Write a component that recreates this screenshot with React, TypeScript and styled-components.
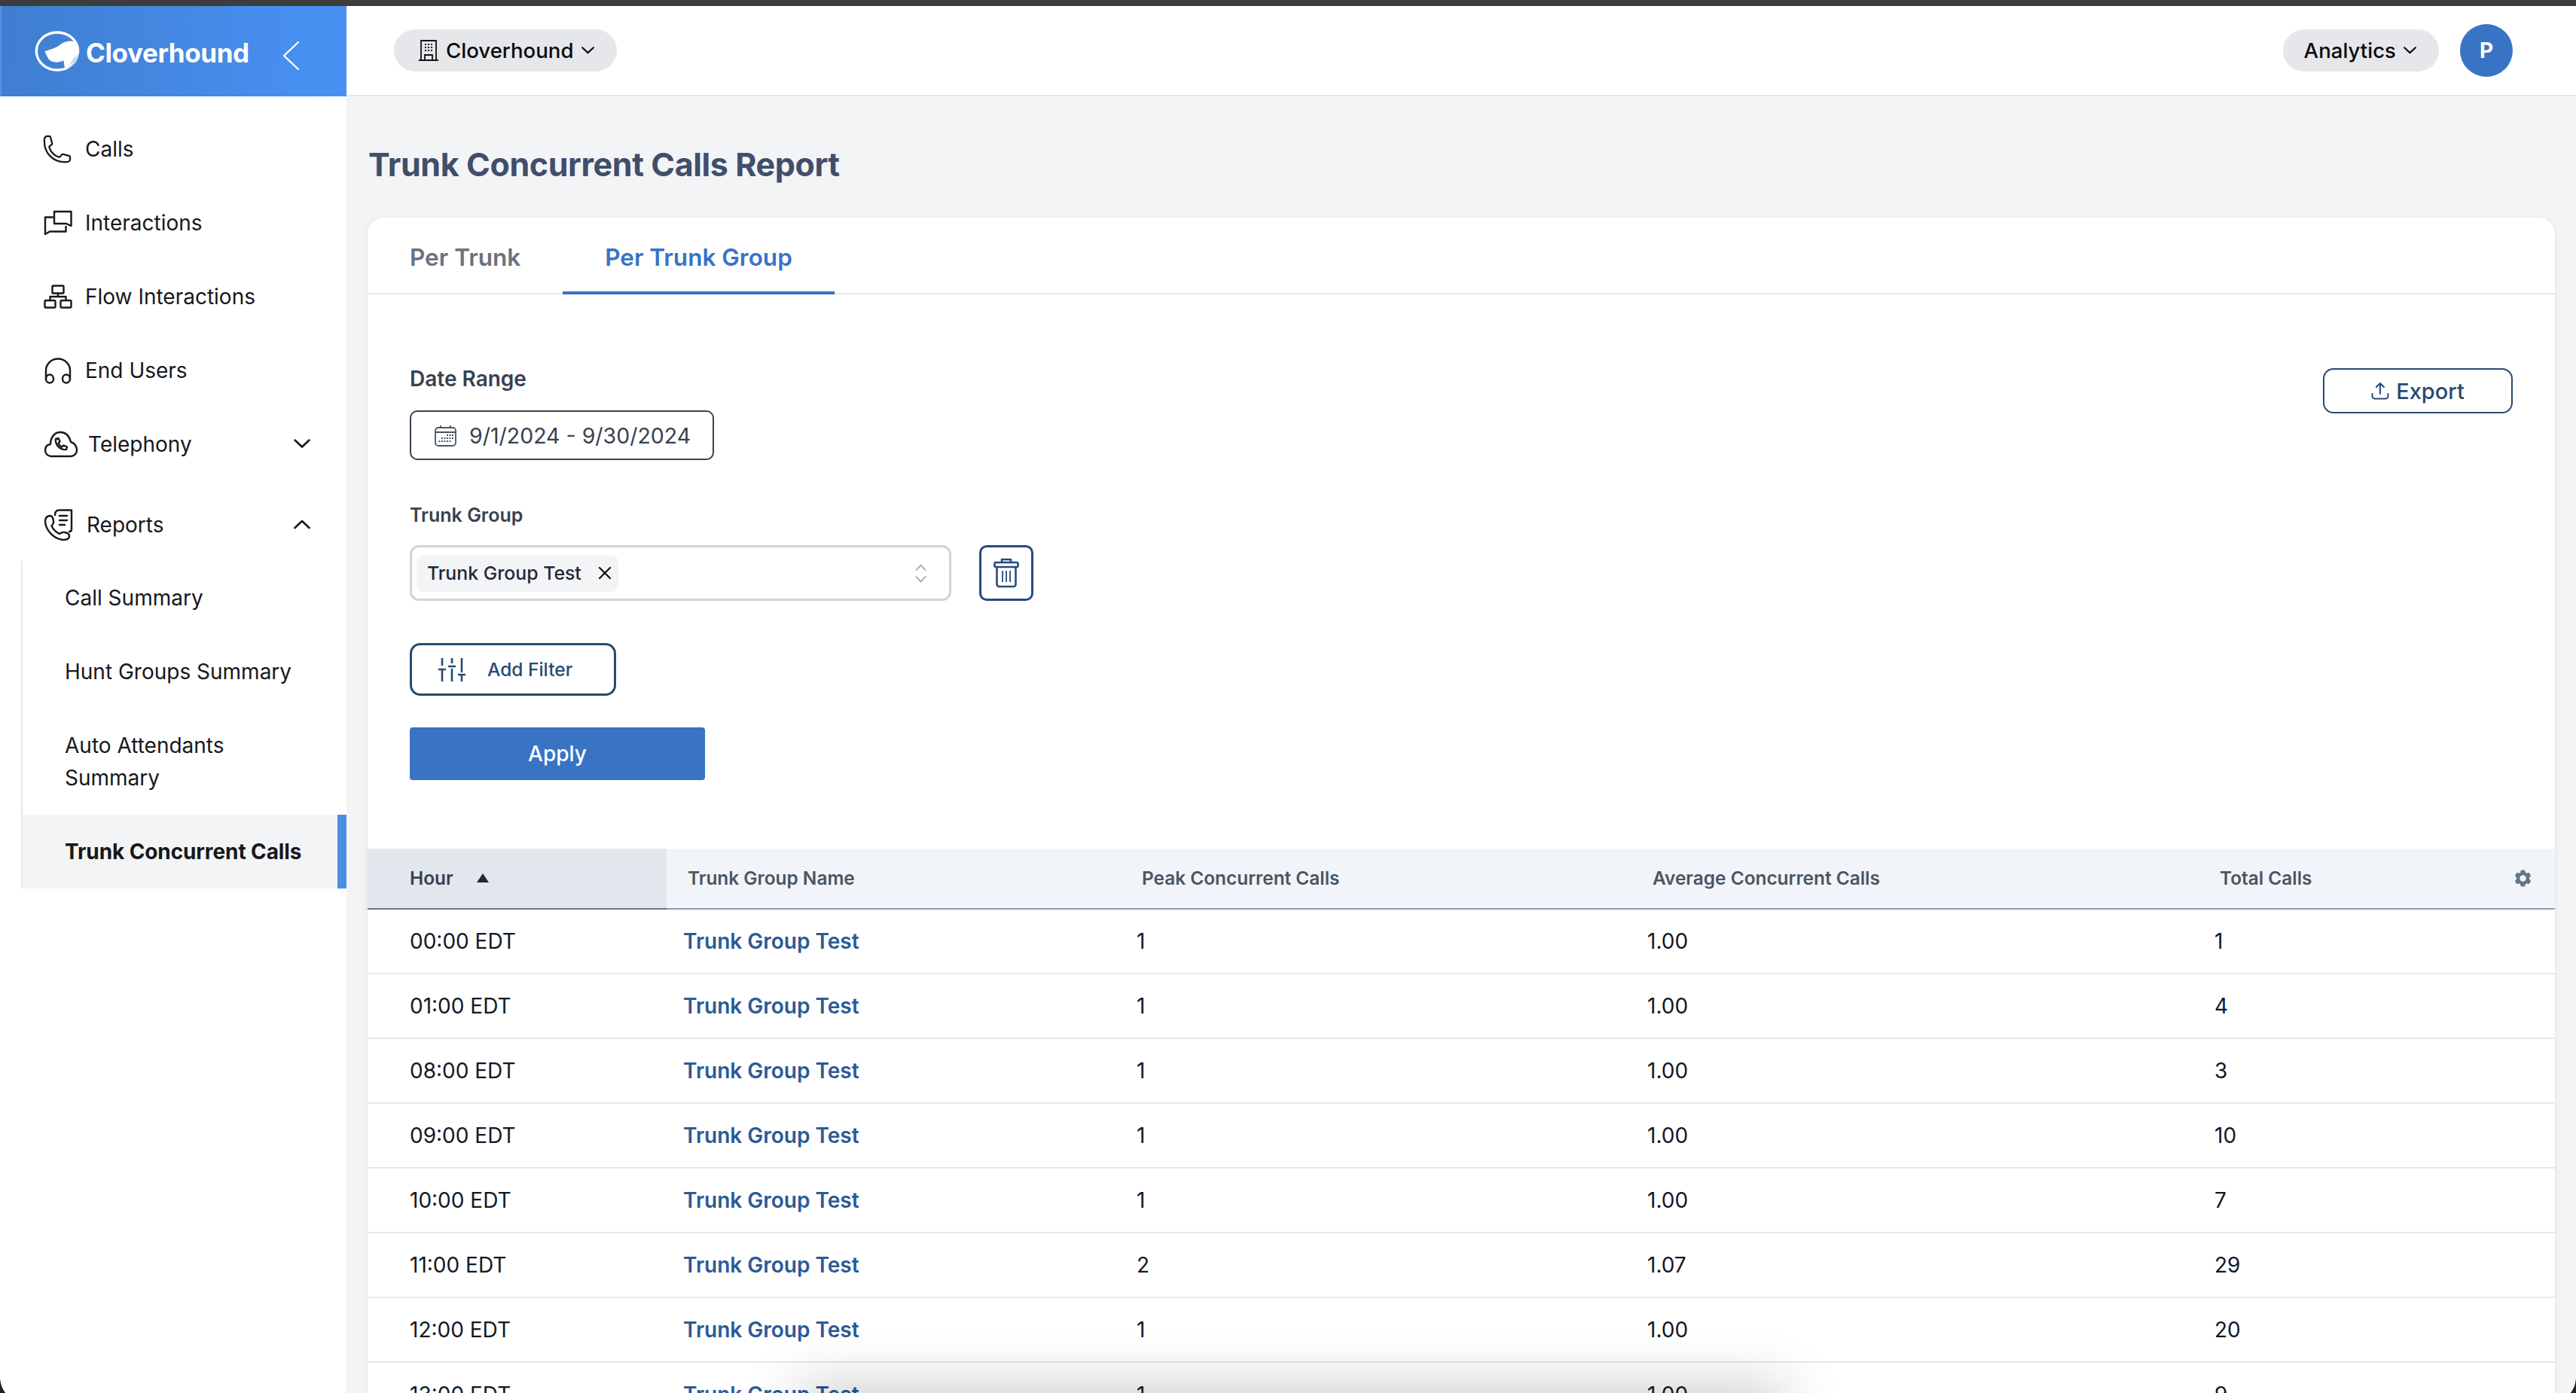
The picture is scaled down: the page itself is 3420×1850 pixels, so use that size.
import React from "react";
import styled, { createGlobalStyle } from "styled-components";
import { HiOutlinePhone, HiCog6Tooth } from "react-icons/hi2";

const GlobalStyle = createGlobalStyle`
  * { box-sizing: border-box; }
  html, body { margin: 0; padding: 0; height: 100%; }
  body { font-family: Inter, "Liberation Sans", sans-serif; background: #fff; overflow: hidden; }
`;

const Page = styled.div`
  position: relative;
  width: 3420px;
  height: 1850px;
  display: flex;
  flex-direction: column;
  overflow: hidden;
`;

const TopStrip = styled.div`
  height: 8px;
  flex: none;
  background: #3c3c3c;
`;

const Body = styled.div`
  flex: 1;
  display: flex;
  min-height: 0;
`;

const Sidebar = styled.aside`
  width: 460px;
  flex: none;
  background: #fff;
  display: flex;
  flex-direction: column;
`;

const Brand = styled.div`
  height: 120px;
  flex: none;
  display: flex;
  align-items: center;
  padding-left: 44px;
  border-left: 2px solid #5b93dc;
  background: linear-gradient(90deg, #3f7ed0 0%, #478ff0 85%, #4790f2 100%);
  color: #fff;
`;

const BrandName = styled.span`
  font-size: 35px;
  font-weight: 700;
  letter-spacing: -0.4px;
  margin-left: 8px;
  margin-top: 4px;
`;

const Collapse = styled.svg`
  margin-left: 44px;
  margin-top: 12px;
`;

const Nav = styled.nav`
  padding-top: 20px;
  display: flex;
  flex-direction: column;
`;

const NavRow = styled.div<{ $gap?: number }>`
  height: 98px;
  flex: none;
  display: flex;
  align-items: center;
  padding: 1px 48px 0 58px;
  margin-top: ${(p) => p.$gap ?? 0}px;
  font-size: 28px;
  color: #16181d;

  & > span {
    flex: 1;
  }
`;

const IconSlot = styled.div<{ $width: number }>`
  width: ${(p) => p.$width}px;
  flex: none;
  display: flex;
  align-items: center;
  color: #16181d;
`;

const PhoneIcon = styled(HiOutlinePhone)`
  margin-left: -3px;
  stroke-width: 1.3;
`;

const SubNav = styled.div`
  margin-left: 28px;
  border-left: 2px solid #e5e7eb;
  display: flex;
  flex-direction: column;
`;

const SubItem = styled.div<{ $active?: boolean }>`
  min-height: 98px;
  display: flex;
  align-items: center;
  padding: 1px 20px 0 56px;
  font-size: 28px;
  line-height: 43px;
  color: #16181d;
  font-weight: ${(p) => (p.$active ? 700 : 400)};
  letter-spacing: ${(p) => (p.$active ? "-0.1px" : "0")};
  background: ${(p) => (p.$active ? "#f3f4f6" : "transparent")};
  border-right: ${(p) => (p.$active ? "12px solid #4a8fe3" : "none")};
`;

const TallSubItem = styled(SubItem)`
  min-height: 141px;
  padding-right: 100px;
`;

const Main = styled.main`
  flex: 1;
  min-width: 0;
  background: #f3f4f6;
  display: flex;
  flex-direction: column;
`;

const Header = styled.header`
  height: 120px;
  flex: none;
  background: #fff;
  border-bottom: 2px solid #e5e7eb;
  display: flex;
  align-items: center;
  justify-content: space-between;
  padding: 0 84px 0 63px;
`;

const HeaderRight = styled.div`
  display: flex;
  align-items: center;
  gap: 28px;
`;

const Pill = styled.div<{ $left: number }>`
  height: 56px;
  display: flex;
  align-items: center;
  border-radius: 28px;
  background: #e5e7eb;
  padding: 0 30px 0 ${(p) => p.$left}px;
  font-size: 27.6px;
  font-weight: 500;
  color: #0b0b0b;
  gap: 10px;
`;

const Avatar = styled.div`
  width: 70px;
  height: 70px;
  border-radius: 50%;
  background: #3873c4;
  color: #fff;
  font-size: 28px;
  font-weight: 700;
  display: flex;
  align-items: center;
  justify-content: center;
`;

const Content = styled.div`
  flex: 1;
  min-height: 0;
  padding: 62px 28px 0 28px;
  display: flex;
  flex-direction: column;
`;

const Title = styled.h1`
  margin: 0 0 43px 1px;
  font-size: 43px;
  line-height: 56px;
  font-weight: 700;
  color: #414e6b;
  letter-spacing: -0.4px;
`;

const Card = styled.section`
  flex: 1;
  background: #fff;
  border-radius: 22px 22px 0 0;
  box-shadow: 0 2px 8px rgba(0, 0, 0, 0.08);
  display: flex;
  flex-direction: column;
`;

const Tabs = styled.div`
  height: 102px;
  flex: none;
  display: flex;
  border-bottom: 2px solid #e5e7eb;
`;

const Tab = styled.div<{ $active?: boolean }>`
  height: 102px;
  padding: 6px 56px 0;
  display: flex;
  align-items: center;
  font-size: 31.5px;
  font-weight: 600;
  color: ${(p) => (p.$active ? "#3873c4" : "#6b7280")};
  border-bottom: 4px solid ${(p) => (p.$active ? "#3873c4" : "transparent")};
`;

const Filters = styled.div`
  flex: none;
  display: flex;
  justify-content: space-between;
  align-items: flex-start;
  padding: 92px 56px 91px 56px;
`;

const FilterColumn = styled.div`
  display: flex;
  flex-direction: column;
  align-items: flex-start;
`;

const DateLabel = styled.div`
  font-size: 28px;
  line-height: 40px;
  font-weight: 600;
  color: #374151;
`;

const DateButton = styled.div`
  margin-top: 22px;
  width: 404px;
  height: 66px;
  border: 2px solid #374151;
  border-radius: 10px;
  display: flex;
  align-items: center;
  padding-left: 31px;
  gap: 17px;
  font-size: 28.5px;
  color: #374151;
`;

const GroupLabel = styled.div`
  margin-top: 55px;
  font-size: 25px;
  line-height: 36px;
  font-weight: 600;
  color: #374151;
`;

const SelectRow = styled.div`
  margin-top: 22px;
  display: flex;
  gap: 37px;
`;

const Select = styled.div`
  width: 719px;
  height: 74px;
  border: 3px solid #d1d5db;
  border-radius: 12px;
  display: flex;
  align-items: center;
  justify-content: space-between;
  padding: 0 30px 0 6px;
`;

const Tag = styled.div`
  height: 49px;
  width: 268px;
  border-radius: 10px;
  background: #f3f4f6;
  display: flex;
  align-items: center;
  justify-content: space-between;
  padding: 0 9px 0 14px;
  font-size: 24.8px;
  font-weight: 500;
  color: #1f2937;
`;

const TrashButton = styled.div`
  width: 72px;
  height: 74px;
  border: 3px solid #264a80;
  border-radius: 10px;
  display: flex;
  align-items: center;
  justify-content: center;
`;

const AddFilter = styled.div`
  margin-top: 56px;
  width: 274px;
  height: 70px;
  border: 3px solid #264a73;
  border-radius: 14px;
  display: flex;
  align-items: center;
  padding-left: 35px;
  gap: 29px;
  font-size: 24.5px;
  font-weight: 500;
  color: #264a73;
`;

const ApplyButton = styled.div`
  margin-top: 42px;
  width: 392px;
  height: 70px;
  border-radius: 4px;
  background: #3873c4;
  color: #fff;
  font-size: 28px;
  font-weight: 500;
  display: flex;
  align-items: center;
  justify-content: center;
`;

const ExportButton = styled.div`
  margin-top: 6px;
  width: 252px;
  height: 60px;
  border: 2px solid #264a73;
  border-radius: 14px;
  display: flex;
  align-items: center;
  justify-content: center;
  gap: 9px;
  font-size: 29px;
  font-weight: 500;
  color: #264a73;
`;

const columns = "397px 603px 678px 753px 473px";

const HeadRow = styled.div`
  height: 81px;
  flex: none;
  display: grid;
  grid-template-columns: ${columns};
  background: #f1f5f9;
  border-bottom: 2px solid #8e9bb0;
`;

const HeadCell = styled.div<{ $sorted?: boolean }>`
  position: relative;
  display: flex;
  align-items: center;
  padding-left: ${(p) => (p.$sorted ? 56 : 28)}px;
  padding-bottom: 2px;
  font-size: 24.4px;
  font-weight: 600;
  color: ${(p) => (p.$sorted ? "#374151" : "#4b5563")};
  background: ${(p) => (p.$sorted ? "#e2e7ed" : "transparent")};
  box-shadow: ${(p) => (p.$sorted ? "0 2px 0 #64748b" : "none")};
`;

const SortMark = styled.span`
  width: 0;
  height: 0;
  margin-left: 31px;
  border-left: 8px solid transparent;
  border-right: 8px solid transparent;
  border-bottom: 12px solid #1f2937;
`;

const GearSlot = styled.div`
  position: absolute;
  right: 29px;
  top: 26px;
  display: flex;
  color: #64748b;
`;

const Row = styled.div`
  height: 86px;
  flex: none;
  display: grid;
  grid-template-columns: ${columns};
  align-items: center;
  border-bottom: 2px solid #e5e7eb;
  font-size: 28px;
  color: #111827;
`;

const Cell = styled.div<{ $first?: boolean }>`
  padding-left: ${(p) => (p.$first ? 56 : 21)}px;
`;

const LinkCell = styled(Cell)`
  padding-left: 22px;
  color: #2c5a96;
  font-weight: 600;
`;

const DockShadow = styled.div`
  position: absolute;
  left: 1090px;
  width: 1250px;
  bottom: -90px;
  height: 70px;
  box-shadow: 0 0 80px 30px rgba(0, 0, 0, 0.2);
  pointer-events: none;
`;

const Corner = styled.div<{ $side: "left" | "right" }>`
  position: absolute;
  bottom: 0;
  ${(p) => p.$side}: 0;
  width: 32px;
  height: 20px;
  background: radial-gradient(
    circle 32px at ${(p) => (p.$side === "left" ? "32px" : "0px")} 0,
    transparent 31.5px,
    #24241a 32px
  );
  pointer-events: none;
`;

const Line = {
  fill: "none",
  stroke: "currentColor",
  strokeWidth: 2.4,
  strokeLinecap: "round" as const,
  strokeLinejoin: "round" as const,
};

const Logo = () => (
  <svg width="60" height="56" viewBox="45 55 180 168" fill="none">
    <ellipse cx="135" cy="139" rx="83" ry="75" stroke="#fff" strokeWidth="10" />
    <path
      d="M85 140 C105 132 130 128 148 112 C162 100 185 96 200 100 C212 112 218 128 216 146 C204 172 186 196 165 208 L160 176 C140 186 112 186 100 170 C94 160 90 150 85 140 Z"
      fill="#fff"
    />
    <path d="M222 150 C212 176 196 198 172 214" stroke="#5d9bee" strokeWidth="3" />
  </svg>
);

const InteractionsIcon = () => (
  <svg width="38" height="34" viewBox="0 0 38 34" {...Line}>
    <path d="M14 2 H36.5 V21 L30 18 H14 Z" />
    <path d="M12 9.5 H2 V32 L8 28.5 H29.5 V22" />
  </svg>
);

const FlowIcon = () => (
  <svg width="38" height="32" viewBox="0 0 38 32" {...Line}>
    <rect x="11.5" y="1.5" width="15" height="10" rx="1" />
    <rect x="1.5" y="21" width="14" height="9.5" rx="1.5" />
    <rect x="22.5" y="21" width="14" height="9.5" rx="1.5" />
    <path d="M19 11.5 V16 M8.5 21 V16 H29.5 V21" />
  </svg>
);

const HeadsetIcon = () => (
  <svg width="38" height="36" viewBox="0 0 38 36" {...Line}>
    <path d="M3 30 V18 a16 15.5 0 0 1 32 0 V30" />
    <ellipse cx="8" cy="29" rx="5" ry="5.5" />
    <ellipse cx="30" cy="29" rx="5" ry="5.5" />
  </svg>
);

const CloudPhoneIcon = () => (
  <svg width="46" height="36" viewBox="0 0 46 36" {...Line}>
    <path d="M10 34 C5 34 2 30 2 26 C2 21 5 18.5 9 18 C9 9 14.5 2 22 2 C29 2 34 7 36 15 C41 16 44 21 44 26 C44 30.5 40 34 36 34 Z" />
    <path d="M16 11 L19.5 10 L21.5 14.5 L19.5 17 C20.5 19 22 20.5 24 21.5 L26.5 19.5 L31 21.5 L30 25 C22 26 15 19 16 11 Z" />
  </svg>
);

const ReportsIcon = () => (
  <svg width="40" height="42" viewBox="0 0 40 42" {...Line}>
    <path d="M15 8 C15 3.5 17 1.5 21 1.5 H37 V27 C37 29 36 30 34 30" />
    <path d="M21 9 H31 M21 15 H31 M21 21 H28" />
    <path d="M9 9 C4 9 2 12 2 17 C3 29 14 40 26 41 C31 41 34 39 34 36 C34 33 31 31.5 28 31 C25 30.5 23 31.5 21 33 C16 30.5 12.5 27 10.5 22.5 C12.5 20.5 13.5 18.5 13 15.5 C12.5 12 11.5 9.5 9 9 Z" />
  </svg>
);

const BuildingIcon = () => (
  <svg width="26" height="28" viewBox="0 0 26 28" fill="none" stroke="#111" strokeWidth="1.8">
    <path d="M0 27 H26 M3 27 V1 H23 V27" />
    <path d="M8 27 V20 H18 V27" />
    <path
      d="M8 6 h2 M12 6 h2 M16 6 h2 M8 10 h2 M12 10 h2 M16 10 h2 M8 14 h2 M12 14 h2 M16 14 h2"
      strokeWidth="2"
    />
  </svg>
);

const Chevron = ({ up, size = 22, stroke = 2.6, color = "#16181d" }: { up?: boolean; size?: number; stroke?: number; color?: string }) => (
  <svg width={size} height={size * 0.55} viewBox="0 0 22 12" fill="none" stroke={color} strokeWidth={(stroke * 22) / size} strokeLinecap="round" strokeLinejoin="round">
    <path d={up ? "M1.5 11 L11 2 L20.5 11" : "M1.5 1.5 L11 10.5 L20.5 1.5"} />
  </svg>
);

const CalendarIcon = () => (
  <svg width="29" height="29" viewBox="0 0 29 29" fill="none" stroke="#4b5563" strokeWidth="1.8">
    <rect x="1" y="4" width="27" height="24" rx="4" />
    <path d="M1 10 H28 M8 1 V5 M21 1 V5" />
    <path d="M16 14 h2 M19.5 14 h2 M23 14 h2 M9 18 h2 M12.5 18 h2 M16 18 h2 M19.5 18 h2 M23 18 h2 M5.5 22 h2 M9 22 h2 M12.5 22 h2 M16 22 h2 M19.5 22 h2" />
  </svg>
);

const CloseIcon = () => (
  <svg width="18" height="18" viewBox="0 0 18 18" stroke="#111" strokeWidth="2.2" strokeLinecap="round">
    <path d="M2 2 L16 16 M16 2 L2 16" />
  </svg>
);

const UpDownIcon = () => (
  <svg width="15" height="25" viewBox="0 0 15 25" fill="none" stroke="#9ca3af" strokeWidth="1.8" strokeLinecap="round" strokeLinejoin="round">
    <path d="M1.5 8 L7.5 1.5 L13.5 8 M1.5 17 L7.5 23.5 L13.5 17" />
  </svg>
);

const TrashIcon = () => (
  <svg width="34" height="40" viewBox="0 0 34 40" fill="none" stroke="#264a80" strokeWidth="2.6" strokeLinejoin="round">
    <path d="M11 6 V2 H23 V6" />
    <rect x="1.5" y="6" width="31" height="6" rx="1.5" />
    <path d="M4.5 12 V35 a3 3 0 0 0 3 3 H26.5 a3 3 0 0 0 3 -3 V12" />
    <path d="M12 17 V32 M17 17 V32 M22 17 V32" strokeWidth="1.8" />
  </svg>
);

const SlidersIcon = () => (
  <svg width="36" height="32" viewBox="0 0 36 32" fill="none" stroke="#264a73" strokeWidth="2.6">
    <path d="M5 1 V11 M5 17 V32 M0 16 H10" />
    <path d="M18 1 V8 M18 15 V32 M13 12 H23" />
    <path d="M31 1 V20 M31 24 V32 M26 23 H36" />
  </svg>
);

const ExportIcon = () => (
  <svg width="24" height="24" viewBox="0 0 24 24" fill="none" stroke="#264a73" strokeWidth="2" strokeLinecap="round" strokeLinejoin="round">
    <path d="M12 16 V2 M7 7 L12 2 L17 7" />
    <path d="M1.5 16 V19 a3.5 3.5 0 0 0 3.5 3.5 H19 a3.5 3.5 0 0 0 3.5 -3.5 V16" />
  </svg>
);

const rows = [
  ["00:00 EDT", "1", "1.00", "1"],
  ["01:00 EDT", "1", "1.00", "4"],
  ["08:00 EDT", "1", "1.00", "3"],
  ["09:00 EDT", "1", "1.00", "10"],
  ["10:00 EDT", "1", "1.00", "7"],
  ["11:00 EDT", "2", "1.07", "29"],
  ["12:00 EDT", "1", "1.00", "20"],
  ["13:00 EDT", "1", "1.00", "9"],
];

export default function App() {
  return (
    <Page>
      <GlobalStyle />
      <TopStrip />
      <Body>
        <Sidebar>
          <Brand>
            <Logo />
            <BrandName>Cloverhound</BrandName>
            <Collapse width="23" height="40" viewBox="0 0 23 40" fill="none" stroke="#fff" strokeWidth="2.4" strokeLinecap="round" strokeLinejoin="round">
              <path d="M21 2 L2 20 L21 38" />
            </Collapse>
          </Brand>
          <Nav>
            <NavRow>
              <IconSlot $width={55}>
                <PhoneIcon size={42} />
              </IconSlot>
              Calls
            </NavRow>
            <NavRow>
              <IconSlot $width={55}>
                <InteractionsIcon />
              </IconSlot>
              Interactions
            </NavRow>
            <NavRow>
              <IconSlot $width={55}>
                <FlowIcon />
              </IconSlot>
              Flow Interactions
            </NavRow>
            <NavRow>
              <IconSlot $width={55}>
                <HeadsetIcon />
              </IconSlot>
              End Users
            </NavRow>
            <NavRow>
              <IconSlot $width={59}>
                <CloudPhoneIcon />
              </IconSlot>
              <span>Telephony</span>
              <Chevron />
            </NavRow>
            <NavRow $gap={9}>
              <IconSlot $width={57}>
                <ReportsIcon />
              </IconSlot>
              <span>Reports</span>
              <Chevron up />
            </NavRow>
          </Nav>
          <SubNav>
            <SubItem>Call Summary</SubItem>
            <SubItem>Hunt Groups Summary</SubItem>
            <TallSubItem>Auto Attendants Summary</TallSubItem>
            <SubItem $active>Trunk Concurrent Calls</SubItem>
          </SubNav>
        </Sidebar>
        <Main>
          <Header>
            <Pill $left={33}>
              <BuildingIcon />
              Cloverhound
              <Chevron size={17} stroke={2.2} color="#111" />
            </Pill>
            <HeaderRight>
              <Pill $left={28}>
                Analytics
                <Chevron size={17} stroke={2.2} color="#111" />
              </Pill>
              <Avatar>P</Avatar>
            </HeaderRight>
          </Header>
          <Content>
            <Title>Trunk Concurrent Calls Report</Title>
            <Card>
              <Tabs>
                <Tab>Per Trunk</Tab>
                <Tab $active>Per Trunk Group</Tab>
              </Tabs>
              <Filters>
                <FilterColumn>
                  <DateLabel>Date Range</DateLabel>
                  <DateButton>
                    <CalendarIcon />
                    9/1/2024 - 9/30/2024
                  </DateButton>
                  <GroupLabel>Trunk Group</GroupLabel>
                  <SelectRow>
                    <Select>
                      <Tag>
                        Trunk Group Test
                        <CloseIcon />
                      </Tag>
                      <UpDownIcon />
                    </Select>
                    <TrashButton>
                      <TrashIcon />
                    </TrashButton>
                  </SelectRow>
                  <AddFilter>
                    <SlidersIcon />
                    Add Filter
                  </AddFilter>
                  <ApplyButton>Apply</ApplyButton>
                </FilterColumn>
                <ExportButton>
                  <ExportIcon />
                  Export
                </ExportButton>
              </Filters>
              <HeadRow>
                <HeadCell $sorted>
                  Hour
                  <SortMark />
                </HeadCell>
                <HeadCell>Trunk Group Name</HeadCell>
                <HeadCell>Peak Concurrent Calls</HeadCell>
                <HeadCell>Average Concurrent Calls</HeadCell>
                <HeadCell>
                  Total Calls
                  <GearSlot>
                    <HiCog6Tooth size={27} />
                  </GearSlot>
                </HeadCell>
              </HeadRow>
              {rows.map((row) => (
                <Row key={row[0]}>
                  <Cell $first>{row[0]}</Cell>
                  <LinkCell>Trunk Group Test</LinkCell>
                  <Cell>{row[1]}</Cell>
                  <Cell>{row[2]}</Cell>
                  <Cell>{row[3]}</Cell>
                </Row>
              ))}
            </Card>
          </Content>
        </Main>
      </Body>
      <DockShadow />
      <Corner $side="left" />
      <Corner $side="right" />
    </Page>
  );
}
